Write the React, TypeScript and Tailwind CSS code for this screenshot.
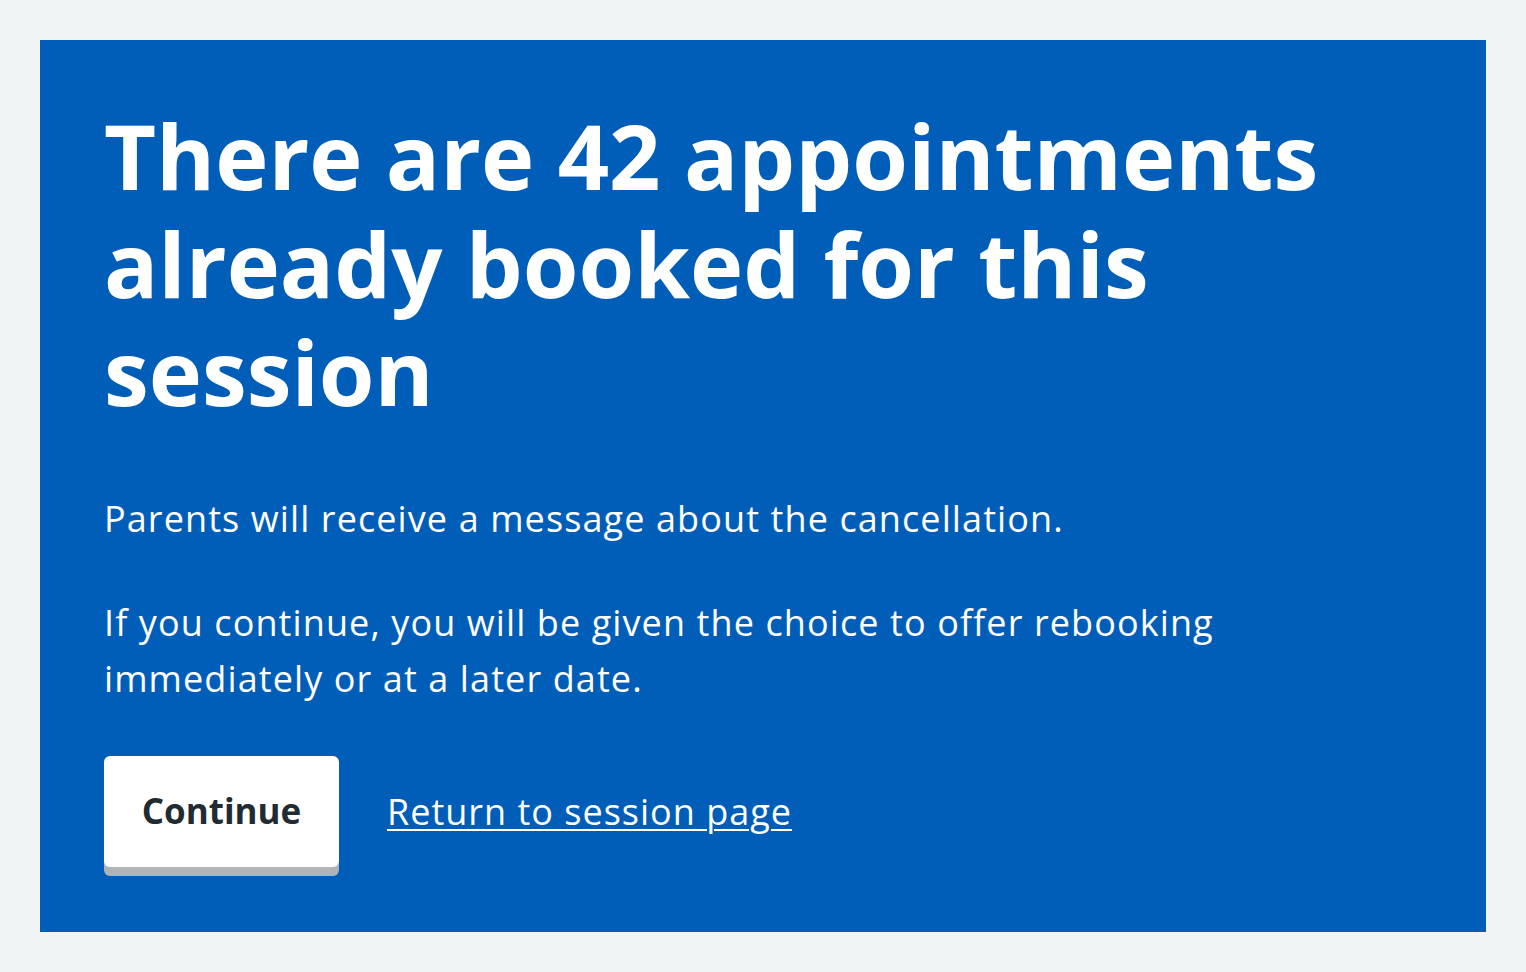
export default function App() {
  return (
    <div className="min-h-screen bg-[#f0f4f5] p-10 font-['Open_Sans',sans-serif]">
      <div className="bg-[#005eb8] px-16 pt-[61px] pb-[65px] text-white">
        <h1 className="mb-[66px] text-[90px] font-bold leading-[108px]">
          There are 42 appointments already booked for this session
        </h1>
        <p className="mb-12 text-[36px] leading-[56px] tracking-[1.1px]">
          Parents will receive a message about the cancellation.
        </p>
        <p className="mb-[49px] text-[36px] leading-[56px] tracking-[1.1px]">
          If you continue, you will be given the choice to offer rebooking immediately or at a later date.
        </p>
        <div className="flex items-center gap-12">
          <button className="flex h-[111px] w-[235px] items-center justify-center rounded-[6px] bg-white text-[35px] font-bold text-[#212b32] shadow-[0_9px_0_#b1b4b6]">
            Continue
          </button>
          <a href="#" className="text-[36px] tracking-[1px] text-white underline decoration-2 underline-offset-4">
            Return to session page
          </a>
        </div>
      </div>
    </div>
  );
}
